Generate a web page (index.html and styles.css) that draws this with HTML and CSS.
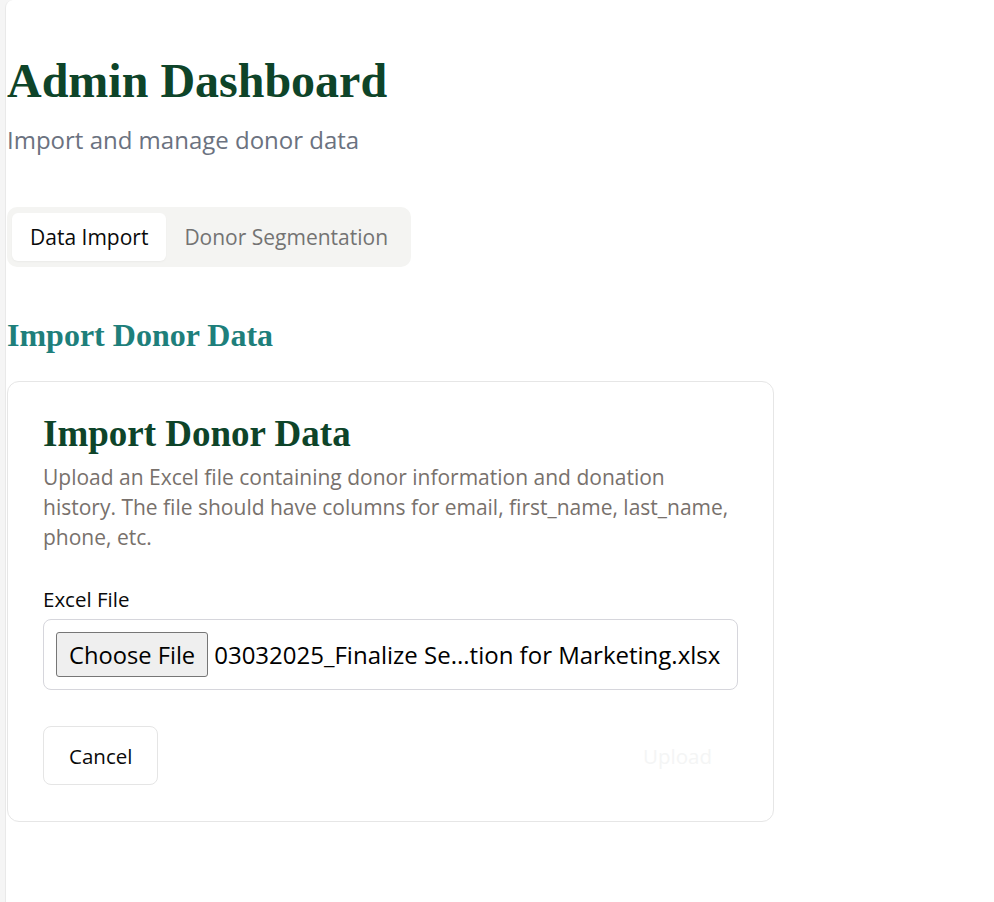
FILE: index.html
```html
<!DOCTYPE html>
<html lang="en">
<head>
<meta charset="utf-8">
<title>Admin Dashboard</title>
<link rel="stylesheet" href="styles.css">
</head>
<body>
<div class="shell">
  <main class="main">
    <h1 class="page-title">Admin Dashboard</h1>
    <p class="page-subtitle">Import and manage donor data</p>

    <div class="tabs">
      <button class="tab tab-active">Data Import</button>
      <button class="tab">Donor Segmentation</button>
    </div>

    <h2 class="section-title">Import Donor Data</h2>

    <section class="card">
      <h3 class="card-title">Import Donor Data</h3>
      <p class="card-desc">Upload an Excel file containing donor information and donation history. The file should have columns for email, first_name, last_name, phone, etc.</p>

      <label class="field-label">Excel File</label>
      <div class="file-box">
        <span class="file-btn">Choose File</span>
        <span class="file-name">03032025_Finalize Se...tion for Marketing.xlsx</span>
      </div>

      <div class="actions">
        <button class="btn btn-outline">Cancel</button>
        <button class="btn btn-upload">Upload</button>
      </div>
    </section>
  </main>
</div>
</body>
</html>
```

FILE: styles.css
```css
* { box-sizing: border-box; }

html, body {
  margin: 0;
  padding: 0;
}

body {
  background: #f5f5f5;
  font-family: "Open Sans", "Liberation Sans", sans-serif;
  color: #111;
}

.shell {
  min-height: 100vh;
  display: flex;
}

.main {
  flex: 1;
  margin-left: 5px;
  border-left: 1px solid #e9e9e9;
  border-top-left-radius: 8px;
  background: #fff;
  min-height: 100vh;
  padding: 53px 0 0 1px;
}

.page-title {
  margin: 0;
  font-family: "Liberation Serif", "Times New Roman", serif;
  font-weight: 700;
  font-size: 48px;
  line-height: 56px;
  color: #0e4429;
}

.page-subtitle {
  margin: 15px 0 0;
  font-size: 24px;
  line-height: 32px;
  color: #6b7280;
}

.tabs {
  margin-top: 51px;
  display: inline-flex;
  background: #f4f4f2;
  border-radius: 10px;
  padding: 6px 5px;
  height: 60px;
}

.tab {
  border: 0;
  background: transparent;
  font-family: "Open Sans", "Liberation Sans", sans-serif;
  font-size: 21px;
  line-height: 28px;
  padding: 0 18px;
  height: 48px;
  border-radius: 6px;
  color: #737373;
}

.tab-active {
  background: #fff;
  color: #0a0a0a;
  box-shadow: 0 1px 2px rgba(0,0,0,0.04);
}

.section-title {
  margin: 48px 0 0;
  font-family: "Liberation Serif", "Times New Roman", serif;
  font-weight: 700;
  font-size: 32px;
  line-height: 40px;
  color: #1e7f7b;
}

.card {
  margin-top: 26px;
  width: 767px;
  border: 1px solid #e6e6e6;
  border-radius: 12px;
  padding: 30px 35px 36px;
  background: #fff;
}

.card-title {
  margin: 0;
  font-family: "Liberation Serif", "Times New Roman", serif;
  font-weight: 700;
  font-size: 37px;
  line-height: 44px;
  color: #0e4429;
}

.card-desc {
  margin: 6px 0 0;
  max-width: 690px;
  font-size: 21px;
  line-height: 30px;
  color: #78716c;
}

.field-label {
  display: block;
  margin-top: 35px;
  font-size: 20.5px;
  line-height: 24px;
  color: #0a0a0a;
}

.file-box {
  margin-top: 8px;
  display: flex;
  align-items: center;
  gap: 6px;
  border: 1px solid #d6d6dc;
  border-radius: 8px;
  padding: 12px;
  height: 71px;
}

.file-btn {
  display: inline-flex;
  align-items: center;
  height: 45px;
  padding: 0 12px;
  background: #efefef;
  border: 1px solid #767676;
  border-radius: 3px;
  font-size: 23.7px;
  color: #000;
}

.file-name {
  font-size: 24px;
  color: #000;
  white-space: nowrap;
}

.actions {
  margin-top: 36px;
  display: flex;
  justify-content: space-between;
}

.btn {
  font-family: "Open Sans", "Liberation Sans", sans-serif;
  font-size: 20.5px;
  height: 59px;
  padding: 0 25px;
  border-radius: 8px;
  background: #fff;
  cursor: pointer;
}

.btn-outline {
  border: 1px solid #e5e5e5;
  color: #0a0a0a;
}

.btn-upload {
  border: 1px solid transparent;
  color: #f4f5f5;
}
```
